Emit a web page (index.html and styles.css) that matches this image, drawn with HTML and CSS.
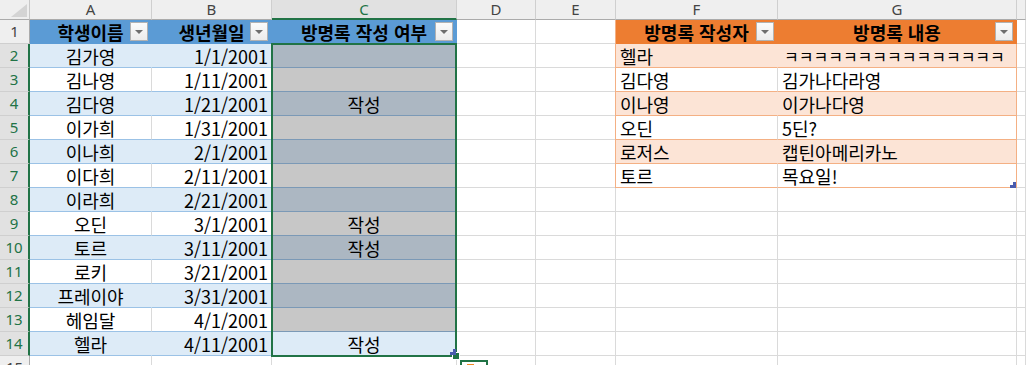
FILE: index.html
```html
<!DOCTYPE html>
<html lang="ko">
<head>
<meta charset="utf-8">
<title>Sheet</title>
<link rel="stylesheet" href="styles.css">
</head>
<body>
<div class="sheet">
  <div class="corner"><span class="tri"></span></div>
  <div class="ch">A</div><div class="ch">B</div><div class="ch sel">C</div><div class="ch">D</div><div class="ch">E</div><div class="ch">F</div><div class="ch">G</div><div class="ch"></div>

  <div class="rh">1</div>
  <div class="h1"><span>학생이름</span><span class="dd"></span></div>
  <div class="h1"><span>생년월일</span><span class="dd"></span></div>
  <div class="h1"><span>방명록 작성 여부</span><span class="dd"></span></div>
  <div></div><div></div>
  <div class="h2 lf"><span>방명록 작성자</span><span class="dd"></span></div>
  <div class="h2 rg2"><span>방명록 내용</span><span class="dd"></span></div>
  <div></div>

  <div class="rh sel">2</div>
  <div class="b1 ctr">김가영</div><div class="b1 rt">1/1/2001</div><div class="gb ctr"></div>
  <div></div><div></div>
  <div class="o2 lt lf">헬라</div><div class="o2 lt rg"><span class="kk">ㅋㅋㅋㅋㅋㅋㅋㅋㅋㅋㅋㅋㅋㅋㅋ</span></div><div></div>

  <div class="rh sel">3</div>
  <div class="w1 ctr">김나영</div><div class="w1 rt">1/11/2001</div><div class="gs ctr"></div>
  <div></div><div></div>
  <div class="w2 lt lf">김다영</div><div class="w2 lt rg">김가나다라영</div><div></div>

  <div class="rh sel">4</div>
  <div class="b1 ctr">김다영</div><div class="b1 rt">1/21/2001</div><div class="gb ctr">작성</div>
  <div></div><div></div>
  <div class="o2 lt lf">이나영</div><div class="o2 lt rg">이가나다영</div><div></div>

  <div class="rh sel">5</div>
  <div class="w1 ctr">이가희</div><div class="w1 rt">1/31/2001</div><div class="gs ctr"></div>
  <div></div><div></div>
  <div class="w2 lt lf">오딘</div><div class="w2 lt rg">5딘?</div><div></div>

  <div class="rh sel">6</div>
  <div class="b1 ctr">이나희</div><div class="b1 rt">2/1/2001</div><div class="gb ctr"></div>
  <div></div><div></div>
  <div class="o2 lt lf">로저스</div><div class="o2 lt rg">캡틴아메리카노</div><div></div>

  <div class="rh sel">7</div>
  <div class="w1 ctr">이다희</div><div class="w1 rt">2/11/2001</div><div class="gs ctr"></div>
  <div></div><div></div>
  <div class="w2 lt lf">토르</div><div class="w2 lt rg">목요일!</div><div></div>

  <div class="rh sel">8</div>
  <div class="b1 ctr">이라희</div><div class="b1 rt">2/21/2001</div><div class="gb ctr"></div>
  <div></div><div></div><div></div><div></div><div></div>

  <div class="rh sel">9</div>
  <div class="w1 ctr">오딘</div><div class="w1 rt">3/1/2001</div><div class="gs ctr">작성</div>
  <div></div><div></div><div></div><div></div><div></div>

  <div class="rh sel">10</div>
  <div class="b1 ctr">토르</div><div class="b1 rt">3/11/2001</div><div class="gb ctr">작성</div>
  <div></div><div></div><div></div><div></div><div></div>

  <div class="rh sel">11</div>
  <div class="w1 ctr">로키</div><div class="w1 rt">3/21/2001</div><div class="gs ctr"></div>
  <div></div><div></div><div></div><div></div><div></div>

  <div class="rh sel">12</div>
  <div class="b1 ctr">프레이야</div><div class="b1 rt">3/31/2001</div><div class="gb ctr"></div>
  <div></div><div></div><div></div><div></div><div></div>

  <div class="rh sel">13</div>
  <div class="w1 ctr">헤임달</div><div class="w1 rt">4/1/2001</div><div class="gs ctr"></div>
  <div></div><div></div><div></div><div></div><div></div>

  <div class="rh sel">14</div>
  <div class="b1 ctr">헬라</div><div class="b1 rt">4/11/2001</div><div class="b1 ctr">작성</div>
  <div></div><div></div><div></div><div></div><div></div>

  <div class="rh">15</div>
  <div></div><div></div><div></div><div></div><div></div><div></div><div></div><div></div>

  <div class="selbox"></div>
  <div class="fillh"></div>
  <svg class="rz rz1" width="6" height="6" viewBox="0 0 6 6"><polygon points="3,0 6,0 6,6 0,6 0,3 3,3" fill="#4a5cae"/></svg>
  <svg class="rz rz2" width="6" height="6" viewBox="0 0 6 6"><polygon points="3,0 6,0 6,6 0,6 0,3 3,3" fill="#4a5cae"/></svg>
  <div class="qa"><span class="qa-mark"></span></div>
</div>
</body>
</html>
```
FILE: styles.css
```css
* { box-sizing: border-box; margin: 0; padding: 0; }
html, body { width: 1026px; height: 365px; overflow: hidden; background: #fff; }
body { font-family: "Noto Sans CJK KR", "Noto Sans", sans-serif; }

.sheet {
  position: relative;
  display: grid;
  grid-template-columns: 30px 122px 120px 185px 79px 80px 162px 239px 9px;
  grid-template-rows: 20px repeat(15, 24px);
}
.sheet > div {
  border-right: 1px solid #dadada;
  border-bottom: 1px solid #dadada;
  display: flex;
  align-items: center;
  font-size: 18px;
  line-height: 1;
  color: #000;
  white-space: nowrap;
  overflow: hidden;
}

/* headings */
.sheet > .corner {
  background: #efefef;
  border-right: 1px solid #c8c8c8;
  border-bottom: 1px solid #ababab;
  justify-content: flex-end;
  align-items: flex-end;
}
.tri {
  display: block;
  width: 0; height: 0;
  border-left: 16px solid transparent;
  border-bottom: 13px solid #d4d4d4;
  margin: 0 2px 2px 0;
}
.sheet > .ch {
  background: #efefef;
  border-right: 1px solid #cfcfcf;
  border-bottom: 1px solid #ababab;
  justify-content: center;
  font-family: "Noto Sans", sans-serif;
  font-size: 15px;
  color: #444;
}
.sheet > .ch.sel {
  background: #e1e1e1;
  color: #217346;
  border-bottom: 2px solid #217346;
}
.sheet > .rh {
  background: #efefef;
  border-right: 1px solid #ababab;
  border-bottom: 1px solid #cfcfcf;
  justify-content: center;
  font-family: "Noto Sans", sans-serif;
  font-size: 15px;
  color: #444;
}
.sheet > .rh.sel {
  background: #e1e1e1;
  color: #217346;
  border-right: 2px solid #217346;
}

/* blue table */
.sheet > .h1 {
  background: #5b9bd5;
  border-right-color: #5b9bd5;
  border-bottom-color: #5b9bd5;
  font-weight: 700;
  justify-content: center;
  position: relative;
}
.sheet > .b1 { background: #ddebf7; border-right-color: #ddebf7; border-bottom-color: #9bc2e6; }
.sheet > .w1 { border-bottom-color: #9bc2e6; }
.sheet > .gb { background: #acb7c2; border-right-color: #acb7c2; border-bottom-color: #7b99b6; }
.sheet > .gs { background: #c7c7c7; border-right-color: #c7c7c7; border-bottom-color: #7b99b6; }

/* orange table */
.sheet > .h2 {
  background: #ed7d31;
  border-right-color: #ed7d31;
  border-bottom-color: #ed7d31;
  font-weight: 700;
  justify-content: center;
  position: relative;
}
.sheet > .o2 { background: #fce4d6; border-right-color: #fce4d6; border-bottom-color: #f4b084; }
.sheet > .w2 { border-bottom-color: #f4b084; }
.sheet > .lf { box-shadow: -1px 0 0 #f4b084; }
.sheet > .rg { border-right-color: #f4b084; }
.sheet > .rg2 { border-right-color: #ed7d31; }

/* alignment */
.sheet > .ctr { justify-content: center; }
.sheet > .rt { justify-content: flex-end; padding-right: 3px; }
.sheet > .lt { justify-content: flex-start; padding-left: 4px; }

.kk { font-size: 16px; padding-left: 2px; }

/* filter buttons */
.dd {
  position: absolute;
  right: 3px;
  top: 2px;
  width: 18px;
  height: 19px;
  background: linear-gradient(#fbfbfb, #ececec);
  border: 1px solid #b2b2b2;
  display: flex;
  align-items: center;
  justify-content: center;
}
.dd::after {
  content: "";
  border-left: 4px solid transparent;
  border-right: 4px solid transparent;
  border-top: 4px solid #6e6e6e;
  margin-top: 1px;
}

/* selection overlay */
.sheet > .selbox {
  position: absolute;
  left: 271px;
  top: 43px;
  width: 186px;
  height: 314px;
  border: 2px solid #217346;
  pointer-events: none;
}
.sheet > .fillh {
  position: absolute;
  left: 453px;
  top: 353px;
  width: 6px;
  height: 6px;
  border: none;
  background: #217346;
  outline: 1px solid #fff;
}
.rz { position: absolute; }
.rz1 { left: 450px; top: 349px; }
.rz2 { left: 1010px; top: 182px; }

.sheet > .qa {
  position: absolute;
  left: 460px;
  top: 360px;
  width: 28px;
  height: 22px;
  border: 2px solid #217346;
  background: #fff;
  align-items: flex-start;
}
.qa-mark {
  display: block;
  margin: 2px 0 0 5px;
  width: 7px;
  height: 3px;
  background: #f08a24;
}
```
